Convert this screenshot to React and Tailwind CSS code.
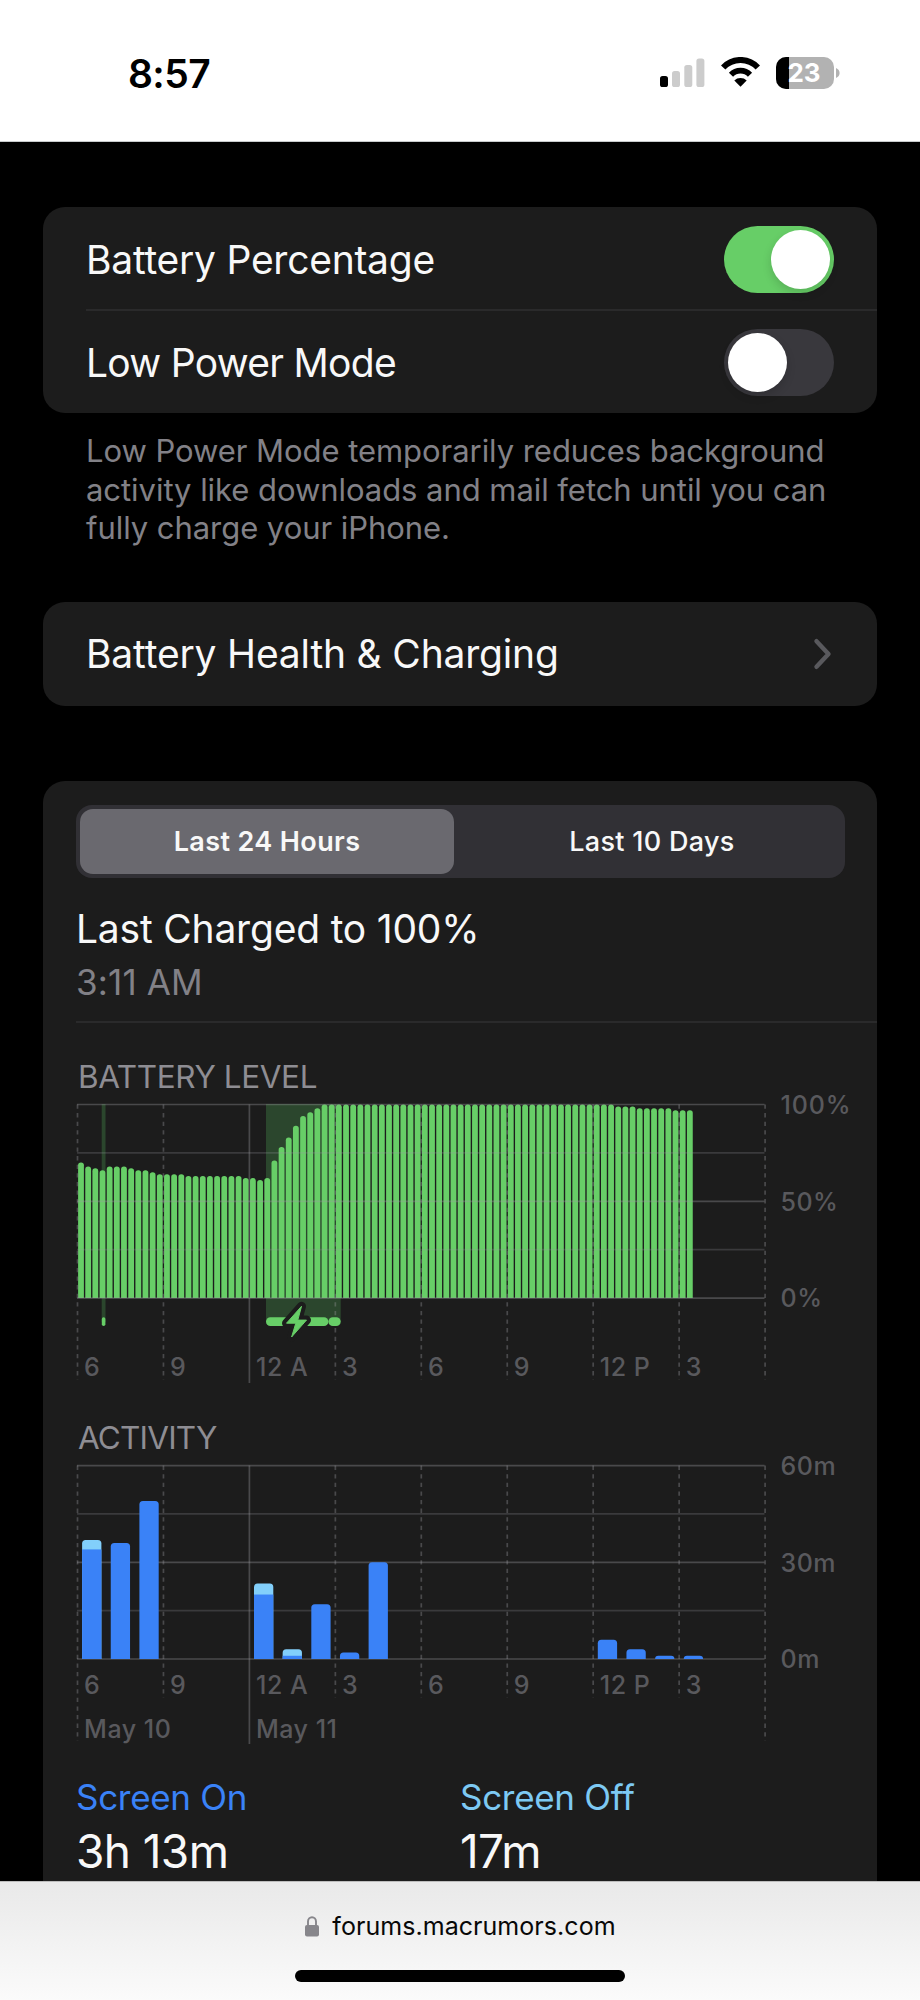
import React from 'react';

const HOURS = ['6', '9', '12 A', '3', '6', '9', '12 P', '3'];
const HOUR_STEP = 85.95;
const BOLT = 'M225.5 214.3L210.5 231.2H219.8L215.6 245L230.5 228.1H221.8Z';

const LEVELS = [
  70, 68, 67, 66, 68, 68, 68, 67, 66, 66, 65, 64, 64, 64, 64,
  63, 63, 63, 63, 63, 63, 63, 63, 62, 62, 61, 62, 71, 78, 83, 89, 94, 96, 98,
  ...Array(41).fill(100),
  99, 99, 99, 98, 98, 98, 98, 98, 97, 97, 97,
];

// hour = offset from 6 PM, values in minutes
const ACTIVITY = [
  { hour: 0, on: 34, off: 2.9 },
  { hour: 1, on: 36, off: 0 },
  { hour: 2, on: 49, off: 0 },
  { hour: 6, on: 20, off: 3.4 },
  { hour: 7, on: 1, off: 2 },
  { hour: 8, on: 17, off: 0 },
  { hour: 9, on: 2, off: 0 },
  { hour: 10, on: 30, off: 0 },
  { hour: 18, on: 6, off: 0 },
  { hour: 19, on: 3, off: 0 },
  { hour: 20, on: 1, off: 0 },
  { hour: 21, on: 1, off: 0 },
];

const topRounded = (x, y, w, h, r) => {
  const k = Math.min(r, h);
  return `M${x} ${y + h}V${y + k}Q${x} ${y} ${x + k} ${y}H${x + w - k}Q${x + w} ${y} ${x + w} ${y + k}V${y + h}Z`;
};

const StatusBar = () => (
  <header className="flex h-[142px] items-start justify-between border-b border-[#c8cbcc] bg-white pl-[128px] pr-[80px] pt-[56px]">
    <span className="mt-[-6px] text-[39px] font-semibold leading-[47px] tracking-[-0.6px] text-black">8:57</span>
    <div className="flex items-start">
      <svg width="46" height="30" viewBox="0 0 46 30" className="mt-[1px]">
        <rect x="0" y="19" width="8" height="11" rx="2.6" fill="#000" />
        <rect x="12" y="14" width="8" height="16" rx="2.6" fill="#ccc" />
        <rect x="24.3" y="8" width="8" height="22" rx="2.6" fill="#ccc" />
        <rect x="36.4" y="1.5" width="8" height="28.5" rx="2.6" fill="#ccc" />
      </svg>
      <svg width="39" height="31" viewBox="0 0 39 31" className="ml-[15px] mt-[1px]">
        <path d="M2.2 10.5A23.6 23.6 0 0 1 36.8 10.5" fill="none" stroke="#000" strokeWidth="6" />
        <path d="M10 17.7A13.2 13.2 0 0 1 29 17.7" fill="none" stroke="#000" strokeWidth="5.8" />
        <path d="M19.5 29.8L13.3 23.6A9 9 0 0 1 25.7 23.6Z" fill="#000" />
      </svg>
      <div className="relative ml-[16px] mt-[1px] flex h-[32px] w-[58px] items-center justify-center overflow-hidden rounded-[10px] bg-[#b2b2b2]">
        <div className="absolute inset-y-0 left-0 w-[13px] bg-black" />
        <span className="relative mr-[2px] text-[26px] font-bold leading-none text-white">23</span>
      </div>
      <svg width="4" height="10" viewBox="0 0 4 10" className="ml-[2px] mt-[12px]">
        <path d="M0 0Q3.6 1.6 3.6 5T0 10Z" fill="#b2b2b2" />
      </svg>
    </div>
  </header>
);

const Toggle = ({ on }) => (
  <div className={`flex h-[67px] w-[110px] items-center rounded-full px-[4px] ${on ? 'justify-end bg-[#67ce67]' : 'justify-start bg-[#39383d]'}`}>
    <div className="size-[59px] rounded-full bg-white shadow-[0_4px_10px_rgba(0,0,0,0.15)]" />
  </div>
);

const GridLines = ({ top, step, bottoms }) => (
  <g stroke="#9a9aa2" strokeOpacity="0.36" strokeWidth="1.7">
    {[0, 1, 2, 3, 4].map((i) => (
      <line key={i} x1="1" x2="688.5" y1={top + i * step} y2={top + i * step} strokeOpacity={i % 2 ? 0.24 : 0.36} />
    ))}
    {bottoms.map((y, i) => (
      <line
        key={i}
        x1={1.5 + i * HOUR_STEP}
        x2={1.5 + i * HOUR_STEP}
        y1={top}
        y2={y}
        strokeDasharray={i === 2 ? undefined : '4.3 4.3'}
      />
    ))}
  </g>
);

const AxisText = ({ x, y, spacing = 0.5, children }) => (
  <text x={x} y={y} fontSize="25" fontWeight="500" letterSpacing={spacing} fill="#59595d">{children}</text>
);

const BatteryChart = () => (
  <svg width="790" height="292" viewBox="0 0 790 292" className="block overflow-visible">
    {/* charging periods */}
    <rect x="25.7" y="12" width="3.8" height="218" fill="#2b462d" />
    <rect x="190" y="12" width="74.7" height="218" fill="#2b462d" />
    {LEVELS.map((v, i) => {
      const h = v * 1.935;
      return <path key={i} d={topRounded(2.1 + i * 7.163, 206 - h, 5.8, h, 2.8)} fill="#67ce67" />;
    })}
    <GridLines top={12.5} step={48.4} bottoms={[288, 288, 291, 288, 288, 288, 288, 288, 288]} />
    <rect x="25.8" y="225.3" width="3.6" height="8.8" rx="1.8" fill="#67ce67" />
    <rect x="190" y="225.3" width="62.4" height="8.8" rx="4.4" fill="#67ce67" />
    <rect x="252.4" y="225.3" width="12.3" height="8.8" rx="4.4" fill="#67ce67" />
    <path d={BOLT} fill="#1c1c1c" stroke="#1c1c1c" strokeWidth="9" strokeLinejoin="round" />
    <path d={BOLT} fill="#67ce67" stroke="#67ce67" strokeWidth="1" strokeLinejoin="round" />
    {HOURS.map((h, i) => (
      <AxisText key={i} x={8.1 + i * HOUR_STEP} y={284}>{h}</AxisText>
    ))}
    <AxisText x={704.5} y={22} spacing={0.9}>100%</AxisText>
    <AxisText x={704.5} y={118.5}>50%</AxisText>
    <AxisText x={704.5} y={215}>0%</AxisText>
  </svg>
);

const ActivityChart = () => (
  <svg width="790" height="292" viewBox="0 0 790 292" className="block overflow-visible">
    <GridLines top={12.6} step={48.35} bottoms={[288, 245, 291, 245, 245, 245, 245, 245, 288]} />
    {ACTIVITY.map(({ hour, on, off }) => {
      const x = 6.1 + hour * 28.65;
      const total = (on + off) * 3.223;
      return (
        <g key={hour}>
          <path d={topRounded(x, 206 - total, 19.3, total, 3.5)} fill={off ? '#82cffb' : '#3a82f7'} />
          {off > 0 && <rect x={x} y={206 - on * 3.223} width="19.3" height={on * 3.223} fill="#3a82f7" />}
        </g>
      );
    })}
    {HOURS.map((h, i) => (
      <AxisText key={i} x={8.1 + i * HOUR_STEP} y={241}>{h}</AxisText>
    ))}
    <AxisText x={8.1} y={285}>May 10</AxisText>
    <AxisText x={180} y={285}>May 11</AxisText>
    <AxisText x={704.5} y={22}>60m</AxisText>
    <AxisText x={704.5} y={118.5}>30m</AxisText>
    <AxisText x={704.5} y={215}>0m</AxisText>
  </svg>
);

const Stat = ({ label, value, color }) => (
  <div className="w-[384px]">
    <p className={`text-[35px] leading-[44px] tracking-[-0.3px] ${color}`}>{label}</p>
    <p className="mt-[4px] text-[46px] leading-[56px] tracking-[-0.6px]">{value}</p>
  </div>
);

const App = () => {
  return (
    <div className="flex h-[2000px] w-[920px] flex-col overflow-hidden bg-black font-['Inter',sans-serif] text-[#f8f8f8]">
      <StatusBar />

      <main className="min-h-0 flex-1 overflow-hidden px-[43px] pt-[65px]">
        <section className="rounded-[22px] bg-[#1c1c1c] pl-[43px] text-[39px]">
          <div className="flex h-[104px] items-center justify-between border-b-2 border-[#2a2a2b] pr-[43px] pt-[2px]">
            <span className="pt-[2px] tracking-[-0.26px]">Battery Percentage</span>
            <Toggle on />
          </div>
          <div className="flex h-[102px] items-center justify-between pr-[43px]">
            <span className="pt-[2px] tracking-[-0.7px]">Low Power Mode</span>
            <Toggle />
          </div>
        </section>
        <p className="ml-[43px] mt-[19px] whitespace-nowrap text-[31px] leading-[38.7px] tracking-[-0.05px] text-[#828187]">
          Low Power Mode temporarily reduces background<br />
          activity like downloads and mail fetch until you can<br />
          fully charge your iPhone.
        </p>

        <section className="mt-[54px] flex h-[104px] items-center justify-between rounded-[22px] bg-[#1c1c1c] pl-[43px] pr-[44px] text-[39px] tracking-[-0.18px]">
          <span>Battery Health &amp; Charging</span>
          <svg width="21" height="32" viewBox="0 0 21 32">
            <path d="M4.5 3.2L16.5 16L4.5 28.8" fill="none" stroke="#59595d" strokeWidth="4.4" strokeLinecap="round" strokeLinejoin="round" />
          </svg>
        </section>

        <section className="mt-[75px] h-[1200px] rounded-[22px] bg-[#1c1c1c] pl-[33px] pt-[24px]">
          <div className="flex h-[73px] w-[769px] items-center rounded-[16px] bg-[#313035] p-[4px] text-center text-[27px] leading-[65px]">
            <div className="w-[374px] rounded-[13px] bg-[#6a696f] font-semibold tracking-[0.38px]">Last 24 Hours</div>
            <div className="flex-1 pl-[9px] font-medium tracking-[0.3px]">Last 10 Days</div>
          </div>
          <h2 className="mt-[27px] text-[39px] leading-[48px] tracking-[-0.2px]">Last Charged to 100%</h2>
          <p className="mt-[8px] text-[35px] leading-[42px] tracking-[0.15px] text-[#828187]">3:11 AM</p>
          <div className="mt-[18px] border-b-2 border-[#2a2a2b]" />
          <h3 className="ml-[2px] mt-[35px] h-[34px] text-[31.5px] leading-[38px] tracking-[-0.4px] text-[#8e8d93]">BATTERY LEVEL</h3>
          <BatteryChart />
          <h3 className="ml-[2px] mt-[35px] h-[34px] text-[31.5px] leading-[38px] tracking-[-0.8px] text-[#8e8d93]">ACTIVITY</h3>
          <ActivityChart />
          <div className="mt-[30px] flex">
            <Stat label="Screen On" value="3h 13m" color="text-[#3a82f7]" />
            <Stat label="Screen Off" value="17m" color="text-[#7dc9f3]" />
          </div>
        </section>
      </main>

      <footer className="flex h-[119px] shrink-0 flex-col items-center border-t border-[#bcbcbc] bg-linear-to-b from-[#e9e9e9] to-[#fbfbfb]">
        <div className="mt-[27px] flex h-[34px] items-center">
          <svg width="16" height="21" viewBox="0 0 16 21">
            <path d="M4 10V5.6a4 4.4 0 0 1 8 0v4.4" fill="none" stroke="#87868b" strokeWidth="1.9" />
            <rect x="1" y="9" width="14" height="11.5" rx="2" fill="#87868b" />
          </svg>
          <span className="ml-[12px] text-[25px] leading-[34px] tracking-[0.05px] text-[#080808]">forums.macrumors.com</span>
        </div>
        <div className="mt-[27px] h-[12px] w-[330px] rounded-full bg-black" />
      </footer>
    </div>
  );
};

export default App;
